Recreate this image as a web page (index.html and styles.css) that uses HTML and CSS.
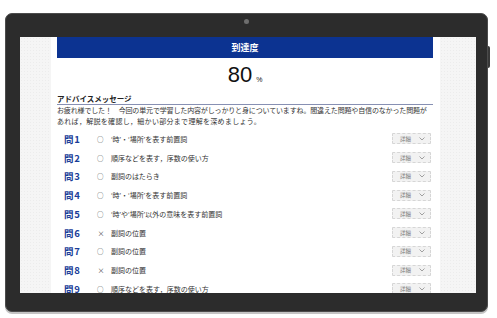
FILE: index.html
```html
<!DOCTYPE html>
<html lang="ja">
<head>
<meta charset="utf-8">
<title>到達度</title>
<link rel="stylesheet" href="styles.css">
</head>
<body>
<div class="tablet">
  <div class="side-btn"></div>
  <div class="bezel-top"><span class="camera"></span></div>
  <div class="screen">
    <div class="page">
      <div class="head">到達度</div>
      <div class="score"><span class="num">80</span><span class="pct">%</span></div>
      <div class="title">アドバイスメッセージ</div>
      <p class="msg"><span class="l1">お疲れ様でした！　今回の単元で学習した内容がしっかりと身についていますね。間違えた問題や自信のなかった問題が</span><br><span class="l2">あれば，解説を確認し，細かい部分まで理解を深めましょう。</span></p>
      <ul class="list">
        <li class="row"><span class="q">問1</span><span class="mark">○</span><span class="topic">‘時’・‘場所’を表す前置詞</span><span class="btn">詳細<svg viewBox="0 0 6 4" width="6" height="4"><path d="M0.5 0.5 L3 3 L5.5 0.5" fill="none" stroke="#8a8a8a" stroke-width="0.8"/></svg></span></li>
        <li class="row"><span class="q">問2</span><span class="mark">○</span><span class="topic">順序などを表す，序数の使い方</span><span class="btn">詳細<svg viewBox="0 0 6 4" width="6" height="4"><path d="M0.5 0.5 L3 3 L5.5 0.5" fill="none" stroke="#8a8a8a" stroke-width="0.8"/></svg></span></li>
        <li class="row"><span class="q">問3</span><span class="mark">○</span><span class="topic">副詞のはたらき</span><span class="btn">詳細<svg viewBox="0 0 6 4" width="6" height="4"><path d="M0.5 0.5 L3 3 L5.5 0.5" fill="none" stroke="#8a8a8a" stroke-width="0.8"/></svg></span></li>
        <li class="row"><span class="q">問4</span><span class="mark">○</span><span class="topic">‘時’・‘場所’を表す前置詞</span><span class="btn">詳細<svg viewBox="0 0 6 4" width="6" height="4"><path d="M0.5 0.5 L3 3 L5.5 0.5" fill="none" stroke="#8a8a8a" stroke-width="0.8"/></svg></span></li>
        <li class="row"><span class="q">問5</span><span class="mark">○</span><span class="topic">‘時’や‘場所’以外の意味を表す前置詞</span><span class="btn">詳細<svg viewBox="0 0 6 4" width="6" height="4"><path d="M0.5 0.5 L3 3 L5.5 0.5" fill="none" stroke="#8a8a8a" stroke-width="0.8"/></svg></span></li>
        <li class="row"><span class="q">問6</span><span class="mark x">×</span><span class="topic">副詞の位置</span><span class="btn">詳細<svg viewBox="0 0 6 4" width="6" height="4"><path d="M0.5 0.5 L3 3 L5.5 0.5" fill="none" stroke="#8a8a8a" stroke-width="0.8"/></svg></span></li>
        <li class="row"><span class="q">問7</span><span class="mark">○</span><span class="topic">副詞の位置</span><span class="btn">詳細<svg viewBox="0 0 6 4" width="6" height="4"><path d="M0.5 0.5 L3 3 L5.5 0.5" fill="none" stroke="#8a8a8a" stroke-width="0.8"/></svg></span></li>
        <li class="row"><span class="q">問8</span><span class="mark x">×</span><span class="topic">副詞の位置</span><span class="btn">詳細<svg viewBox="0 0 6 4" width="6" height="4"><path d="M0.5 0.5 L3 3 L5.5 0.5" fill="none" stroke="#8a8a8a" stroke-width="0.8"/></svg></span></li>
        <li class="row"><span class="q">問9</span><span class="mark">○</span><span class="topic">順序などを表す，序数の使い方</span><span class="btn">詳細<svg viewBox="0 0 6 4" width="6" height="4"><path d="M0.5 0.5 L3 3 L5.5 0.5" fill="none" stroke="#8a8a8a" stroke-width="0.8"/></svg></span></li>
      </ul>
    </div>
  </div>
</div>
</body>
</html>
```
FILE: styles.css
```css
html, body {
  margin: 0;
  padding: 0;
}
body {
  width: 497px;
  height: 318px;
  overflow: hidden;
  background: #ffffff;
  font-family: "Liberation Sans", "Noto Sans CJK JP", sans-serif;
  color: #333;
}
.tablet {
  position: relative;
  box-sizing: border-box;
  margin: 13px 0 0 5px;
  width: 483px;
  height: 299px;
  padding: 0 11px 18px 14px;
  background: #2c2c2c;
  border: 1px solid #4c4c4c;
  border-radius: 7px;
  box-shadow: 0 2px 0 0 #c4c4c4;
}
.side-btn {
  position: absolute;
  left: 482px;
  top: 32px;
  width: 2px;
  height: 22px;
  background: #383838;
  border-radius: 0 2px 2px 0;
}
.bezel-top {
  height: 23px;
  display: flex;
  justify-content: center;
  align-items: flex-start;
  box-sizing: border-box;
  padding-top: 5px;
}
.camera {
  width: 5px;
  height: 5px;
  border-radius: 50%;
  background: #6e6e6e;
  margin-right: 4px;
}
.screen {
  height: 256px;
  overflow: hidden;
  display: flex;
  padding-left: 31px;
  background-color: #f5f5f5;
  background-image: radial-gradient(#ececec 0.5px, transparent 0.7px);
  background-size: 3px 3px;
}
.page {
  width: 389px;
  flex: none;
  box-sizing: border-box;
  padding: 0 6px;
  background: #fff;
}
.head {
  width: 376px;
  height: 21px;
  background: #0c3391;
  color: #fff;
  font-family: "Noto Sans CJK JP", sans-serif;
  font-weight: 700;
  font-size: 9px;
  display: flex;
  align-items: center;
  justify-content: center;
}
.score {
  height: 35px;
  box-sizing: border-box;
  padding-top: 6px;
  line-height: 22px;
  text-align: center;
  color: #111;
  width: 376px;
}
.num {
  font-size: 22px;
}
.pct {
  font-size: 7px;
  margin-left: 4px;
}
.title {
  width: 376px;
  font-family: "Noto Sans CJK JP", sans-serif;
  font-weight: 700;
  font-size: 7.5px;
  line-height: 11px;
  color: #222;
  border-bottom: 1px solid #8790b3;
}
.msg {
  margin: 0;
  font-family: "Noto Sans CJK JP", sans-serif;
  font-size: 7px;
  line-height: 10.5px;
  color: #333;
  white-space: nowrap;
}
.l1 {
  letter-spacing: -0.15px;
}
.l2 {
  letter-spacing: 0.3px;
}
.list {
  list-style: none;
  margin: 3.6px 0 0 0;
  padding: 0;
}
.row {
  height: 18.75px;
  box-sizing: border-box;
  display: flex;
  align-items: center;
  padding-left: 7px;
  width: 374px;
}
.q {
  width: 33px;
  flex: none;
  font-family: "Noto Sans CJK JP", sans-serif;
  font-weight: 700;
  font-size: 9.5px;
  color: #1a3d98;
  letter-spacing: 0.8px;
}
.mark {
  width: 14px;
  flex: none;
  font-family: "Noto Sans CJK JP", sans-serif;
  font-size: 6.5px;
  color: #444;
}
.mark.x {
  font-size: 7px;
  padding-left: 0.5px;
  box-sizing: border-box;
}
.topic {
  flex: 1;
  font-size: 7px;
  color: #333;
  white-space: nowrap;
}
.btn {
  flex: none;
  width: 39px;
  height: 11px;
  box-sizing: border-box;
  display: flex;
  align-items: center;
  padding-left: 7px;
  gap: 8px;
  background: #f2f2f2;
  border: 1px dashed #d6d6d6;
  border-radius: 1px;
  font-family: "Noto Sans CJK JP", sans-serif;
  font-size: 5.5px;
  color: #777;
}
.btn svg {
  display: block;
}
```
